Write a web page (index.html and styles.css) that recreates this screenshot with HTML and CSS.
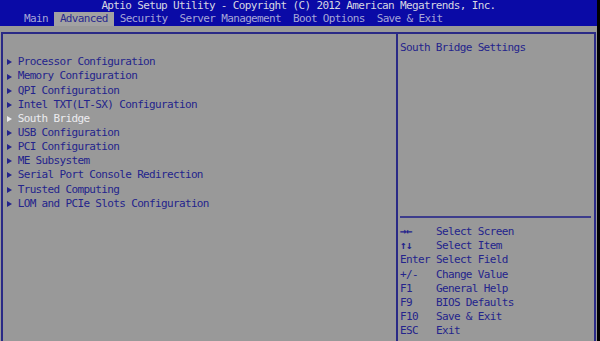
FILE: index.html
```html
<!DOCTYPE html>
<html>
<head>
<meta charset="utf-8">
<link rel="stylesheet" href="styles.css">
</head>
<body>
<div class="screen">
  <header class="top">
    <div class="title">Aptio Setup Utility - Copyright (C) 2012 American Megatrends, Inc.</div>
    <nav class="tabs">
      <span class="tab">Main</span><span class="tab active">Advanced</span><span class="tab">Security</span><span class="tab">Server Management</span><span class="tab">Boot Options</span><span class="tab">Save &amp; Exit</span>
    </nav>
  </header>
  <div class="frame">
    <div class="main">
      <ul class="menu">
        <li class="item"><span class="tri"></span><span>Processor Configuration</span></li>
        <li class="item"><span class="tri"></span><span>Memory Configuration</span></li>
        <li class="item"><span class="tri"></span><span>QPI Configuration</span></li>
        <li class="item"><span class="tri"></span><span>Intel TXT(LT-SX) Configuration</span></li>
        <li class="item selected"><span class="tri"></span><span>South Bridge</span></li>
        <li class="item"><span class="tri"></span><span>USB Configuration</span></li>
        <li class="item"><span class="tri"></span><span>PCI Configuration</span></li>
        <li class="item"><span class="tri"></span><span>ME Subsystem</span></li>
        <li class="item"><span class="tri"></span><span>Serial Port Console Redirection</span></li>
        <li class="item"><span class="tri"></span><span>Trusted Computing</span></li>
        <li class="item"><span class="tri"></span><span>LOM and PCIe Slots Configuration</span></li>
      </ul>
    </div>
    <aside class="side">
      <div class="help">South Bridge Settings</div>
      <div class="rule"></div>
      <div class="keys">
        <span class="k arrows">→←</span><span>Select Screen</span>
        <span class="k arrows">↑↓</span><span>Select Item</span>
        <span class="k">Enter</span><span>Select Field</span>
        <span class="k">+/-</span><span>Change Value</span>
        <span class="k">F1</span><span>General Help</span>
        <span class="k">F9</span><span>BIOS Defaults</span>
        <span class="k">F10</span><span>Save &amp; Exit</span>
        <span class="k">ESC</span><span>Exit</span>
      </div>
    </aside>
  </div>
</div>
</body>
</html>
```
FILE: styles.css
```css
html, body {
  margin: 0;
  padding: 0;
  background: #000;
}
body {
  width: 600px;
  height: 341px;
  overflow: hidden;
  font-family: "DejaVu Sans Mono", "Liberation Mono", monospace;
  font-size: 11px;
  letter-spacing: -0.65px;
}
.screen {
  width: 597px;
  height: 341px;
  background: #999999;
  overflow: hidden;
}
.top {
  background: #0a0aa6;
  height: 26px;
}
.title {
  height: 12px;
  line-height: 12px;
  text-align: center;
  color: #d6d6e2;
  white-space: pre;
}
.tabs {
  display: flex;
  height: 14px;
  line-height: 14px;
  padding-left: 18px;
  color: #a6a6d8;
  white-space: pre;
}
.tab {
  padding: 0 6px;
}
.tab.active {
  background: #a2a2a2;
  color: #28288e;
}
.frame {
  margin: 6px 0 0 1px;
  width: 591px;
  height: 400px;
  border: 2px solid #2a2a86;
  display: flex;
}
.main {
  width: 393px;
  flex: none;
}
.menu {
  list-style: none;
  margin: 0;
  padding: 21.3px 0 0 0;
}
.item {
  display: flex;
  align-items: center;
  height: 14.15px;
  line-height: 14.15px;
  padding-left: 4px;
  color: #24248c;
}
.tri {
  width: 0;
  height: 0;
  border-top: 3px solid transparent;
  border-bottom: 3px solid transparent;
  border-left: 5px solid #24248c;
  margin-right: 5.7px;
}
.item.selected {
  color: #ececf0;
}
.item.selected .tri {
  border-left-color: #ececf0;
}
.side {
  flex: 1;
  border-left: 2px solid #2a2a86;
  color: #24248c;
}
.help {
  height: 175px;
  padding: 7px 0 0 2px;
  line-height: 14.15px;
}
.rule {
  height: 2px;
  margin: 0 3px 0 2px;
  background: #3c3c8c;
}
.keys {
  display: grid;
  grid-template-columns: 36px auto;
  grid-auto-rows: 14.15px;
  line-height: 14.15px;
  padding: 7.2px 0 0 2px;
  white-space: pre;
}
.k {
  color: #24248c;
}
.k.arrows {
  font-weight: bold;
}
```
